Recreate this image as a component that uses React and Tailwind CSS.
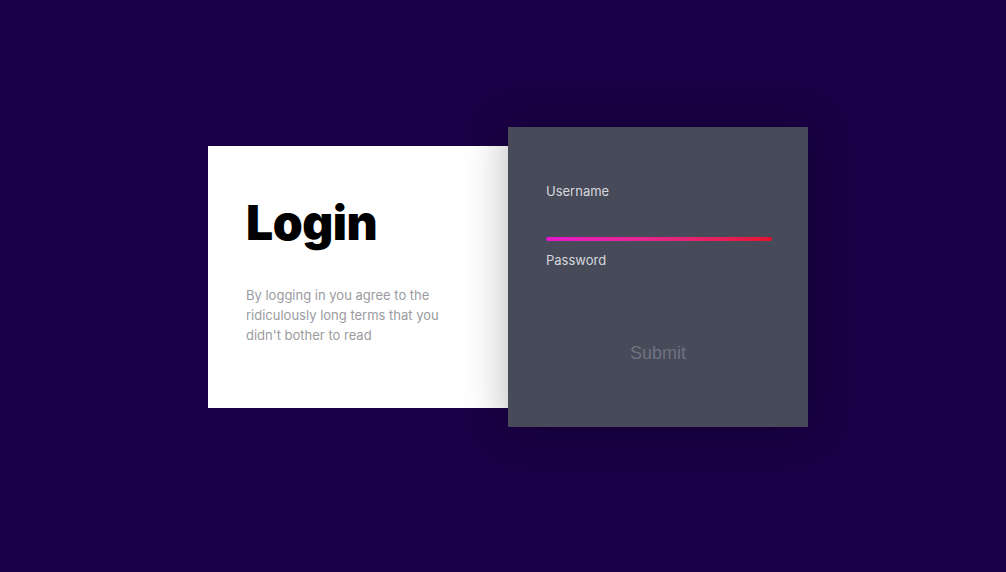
export default function App() {
  return (
    <div className="min-h-[572px] w-full bg-[#1a0046] pl-[208px] pt-[127px]" style={{ fontFamily: "Inter, 'Noto Sans', sans-serif" }}>
      <div className="flex items-center">
        <div className="w-[300px] h-[262px] bg-white pl-[38px] pt-[47px]">
          <h1 className="text-[48px] leading-[60px] font-black text-black tracking-[-0.5px]">Login</h1>
          <p className="mt-[32px] w-[205px] text-[13px] leading-[20px] text-[#9a9b9f]">
            By logging in you agree to the ridiculously long terms that you didn't bother to read
          </p>
        </div>
        <div className="relative z-10 w-[300px] h-[300px] bg-[#474a59] shadow-[0_0_40px_rgba(0,0,0,0.3)] px-[38px] pt-[54px] flex flex-col">
          <label className="h-5 text-[13px] leading-5 text-[#d6d7de]">Username</label>
          <div className="h-9" />
          <div className="h-1 w-[226px] rounded-full bg-gradient-to-r from-[#e814cc] to-[#e6102c]" />
          <label className="mt-[9px] h-5 text-[13px] leading-5 text-[#d6d7de]">Password</label>
          <div className="mt-[69px] text-center text-[18px] leading-[28px] text-[#6f7282]" style={{ fontFamily: "'Liberation Sans', Arial, sans-serif" }}>
            Submit
          </div>
        </div>
      </div>
    </div>
  );
}
